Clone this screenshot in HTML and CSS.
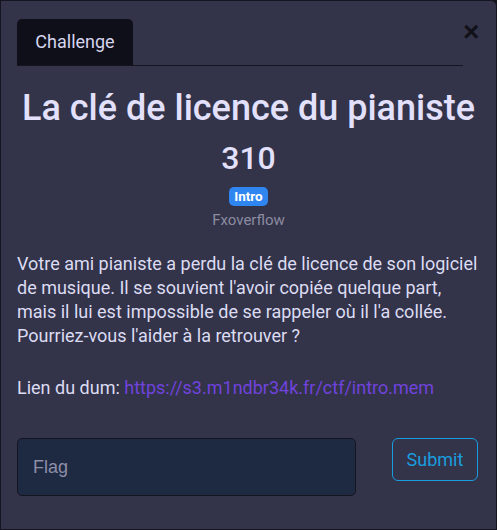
FILE: index.html
```html
<!DOCTYPE html>
<html>
<head>
<meta charset="utf-8">
<link rel="stylesheet" href="styles.css">
</head>
<body>
<div class="modal">
  <div class="head">
    <div class="tabs"><span class="tab">Challenge</span></div>
    <span class="close">&times;</span>
  </div>
  <h1 class="title">La clé de licence du pianiste</h1>
  <div class="points">310</div>
  <div class="tags"><span class="badge">Intro</span></div>
  <div class="author">Fxoverflow</div>
  <p class="desc">Votre ami pianiste a perdu la clé de licence de son logiciel de musique. Il se souvient l'avoir copiée quelque part, mais il lui est impossible de se rappeler où il l'a collée. Pourriez-vous l'aider à la retrouver ?</p>
  <p class="desc link-line">Lien du dum: <a href="#">https://s3.m1ndbr34k.fr/ctf/intro.mem</a></p>
  <div class="form">
    <input class="flag" type="text" placeholder="Flag">
    <button class="submit">Submit</button>
  </div>
</div>
</body>
</html>
```
FILE: styles.css
```css
html, body { margin: 0; padding: 0; background: #14141c; }
body { width: 497px; height: 530px; overflow: hidden; }
.modal {
  box-sizing: border-box;
  width: 497px;
  height: 530px;
  background: #33334a;
  border: 1px solid #15151f;
  border-radius: 0 6px 0 0;
  padding: 18px 16px 0 16px;
  font-family: Roboto, "Liberation Sans", sans-serif;
  color: #e2e2f6;
}
.head { display: flex; align-items: flex-start; }
.tabs { flex: 0 0 446px; border-bottom: 1px solid #15151f; display: flex; }
.tab {
  display: block;
  background: #0f0f19;
  color: #d6d6ee;
  font-size: 18px;
  line-height: 22px;
  padding: 12px 18px;
  border-radius: 5px 5px 0 0;
  width: 80px;
  text-align: center;
}
.close { margin-left: auto; margin-right: 2px; margin-top: 2px; font-size: 28px; font-weight: 700; line-height: 22px; color: #111118; font-family: "Liberation Sans", sans-serif; }
.title { margin: 20px 0 0; font-size: 36px; font-weight: 500; line-height: 44px; text-align: center; color: #e2e0fa; }
.points { margin-top: 10px; font-size: 32px; font-weight: 500; line-height: 36px; text-align: center; color: #e2e0fa; }
.tags { margin-top: 11px; text-align: center; line-height: 19px; height: 19px; }
.badge { display: inline-block; vertical-align: top; background: #2f86f0; color: #fff; font-weight: 700; font-size: 13.5px; line-height: 19px; padding: 0 5px; border-radius: 5px; }
.author { text-align: center; color: #8c8ca0; font-size: 15px; line-height: 22px; margin-top: 3px; }
.desc { margin: 21px 0 0; font-size: 18px; line-height: 24px; color: #dcdcf2; }
.link-line { margin-top: 28px; }
.link-line a { color: #7043dd; text-decoration: none; }
.form { display: flex; align-items: flex-start; margin-top: 38px; padding-right: 2px; }
.flag {
  box-sizing: border-box;
  width: 339px; height: 58px;
  background: #1e2942;
  border: 1px solid #15151f;
  border-radius: 5px;
  padding: 0 15px;
  font-family: "Liberation Sans", sans-serif;
  font-size: 18px;
  color: #e0e0f0;
  outline: none;
}
.flag::placeholder { color: #8e8ea8; }
.submit {
  margin-left: auto;
  box-sizing: border-box;
  width: 86px; height: 43px;
  background: transparent;
  border: 1px solid #1a9ddf;
  border-radius: 6px;
  color: #1a9ddf;
  font-family: Roboto, sans-serif;
  font-size: 18px;
}
```
